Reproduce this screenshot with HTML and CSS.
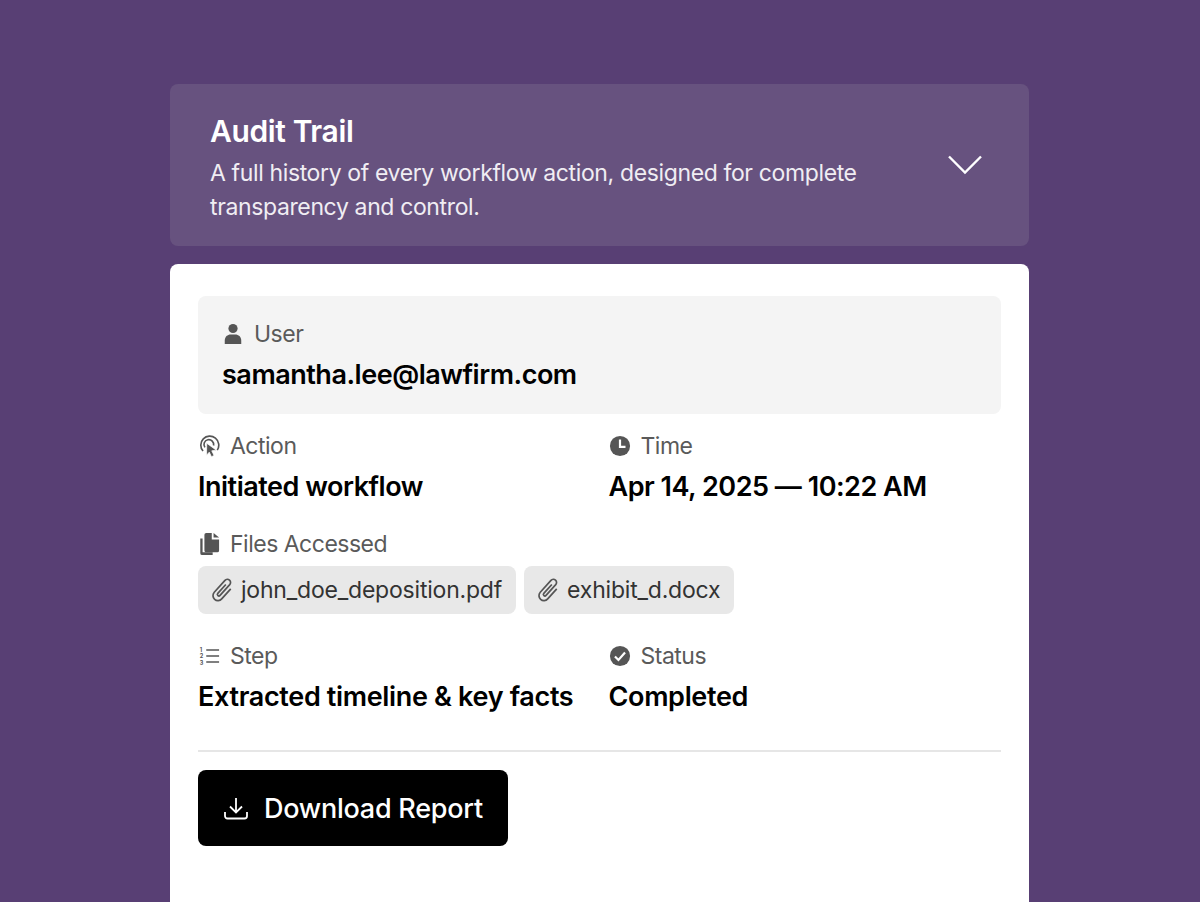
FILE: index.html
```html
<!DOCTYPE html>
<html lang="en">
<head>
    <meta charset="UTF-8">
    <title>Audit Trail</title>
    <link rel="stylesheet" href="styles.css">
</head>
<body>
    <main class="panel">
        <header class="panel-head">
            <div class="panel-head-text">
                <h1>Audit Trail</h1>
                <p>A full history of every workflow action, designed for complete transparency and control.</p>
            </div>
            <svg class="chevron" viewBox="0 0 34 20" width="34" height="20" fill="none" stroke="#fff" stroke-width="2.4"><path d="M1 1.5 17 17.5 33 1.5"/></svg>
        </header>

        <section class="card">
            <div class="user-box">
                <div class="label">
                    <svg class="icon" viewBox="0 0 24 24" fill="#555"><circle cx="12" cy="6" r="5"/><path d="M3 23v-4c0-4 3-6.500 6.500-6.500h5c3.500 0 6.500 2.500 6.500 6.500v4z"/></svg>
                    User
                </div>
                <div class="value">samantha.lee@lawfirm.com</div>
            </div>

            <div class="row">
                <div class="field">
                    <div class="label">
                        <svg class="icon" viewBox="0 0 24 24" fill="none" stroke="#555" stroke-width="1.800"><path d="M5.500 17.500a9.800 9.800 0 1 1 15.500-1"/><path d="M7.500 13.500a5.300 5.300 0 1 1 9.500-2"/><path d="M9.500 9 20 16.500l-5 .8 2.500 5-2.800 1.400-2.400-5-3 3.300z" fill="#555" stroke="#fff" stroke-width=".8"/></svg>
                        Action
                    </div>
                    <div class="value">Initiated workflow</div>
                </div>
                <div class="field">
                    <div class="label">
                        <svg class="icon" viewBox="0 0 24 24"><circle cx="12" cy="12" r="11" fill="#555"/><path d="M12 5v8h6" fill="none" stroke="#fff" stroke-width="2.400"/></svg>
                        Time
                    </div>
                    <div class="value">Apr 14, 2025 — 10:22 AM</div>
                </div>
            </div>

            <div class="files">
                <div class="label">
                    <svg class="icon" viewBox="0 0 24 24" fill="#555"><path d="M2.500 6h2.500v15h11v3H4.500a2 2 0 0 1-2-2z"/><path d="M7 2a2 2 0 0 1 2-2h6v7h8v12a2 2 0 0 1-2 2H9a2 2 0 0 1-2-2z"/><path d="M17 0l6 5h-6z"/></svg>
                    Files Accessed
                </div>
                <div class="chips">
                    <span class="chip">
                        <svg class="clip" viewBox="0 0 24 24" fill="none" stroke="#555" stroke-width="1.700"><path transform="rotate(42 12 12)" d="M17 6v13.500a5 5 0 0 1-10 0V3.500a3.200 3.200 0 0 1 6.400 0v14.500a1.500 1.500 0 0 1-3 0V6"/></svg>
                        john_doe_deposition.pdf
                    </span>
                    <span class="chip">
                        <svg class="clip" viewBox="0 0 24 24" fill="none" stroke="#555" stroke-width="1.700"><path transform="rotate(42 12 12)" d="M17 6v13.500a5 5 0 0 1-10 0V3.500a3.200 3.200 0 0 1 6.400 0v14.500a1.500 1.500 0 0 1-3 0V6"/></svg>
                        exhibit_d.docx
                    </span>
                </div>
            </div>

            <div class="row">
                <div class="field">
                    <div class="label">
                        <svg class="icon" viewBox="0 0 24 24" fill="none" stroke="#555"><path d="M9 5.500h14M9 12h14M9 18.500h14" stroke-width="1.800"/><text class="step-nums" x="2" y="7.500">1</text><text class="step-nums" x="2" y="14.500">2</text><text class="step-nums" x="2" y="21.500">3</text></svg>
                        Step
                    </div>
                    <div class="value value-loose">Extracted timeline &amp; key facts</div>
                </div>
                <div class="field">
                    <div class="label">
                        <svg class="icon" viewBox="0 0 24 24"><circle cx="12" cy="12" r="11" fill="#555"/><path d="M6.500 12.500l3.800 3.800 7.200-8" fill="none" stroke="#fff" stroke-width="2.400"/></svg>
                        Status
                    </div>
                    <div class="value value-loose">Completed</div>
                </div>
            </div>

            <hr class="divider">

            <button class="download" type="button">
                <svg class="download-icon" viewBox="0 0 24 24" fill="none" stroke="#fff" stroke-width="1.800"><path d="M12 2v14M6 10.500l6 6 6-6"/><path d="M1 16v4a2.500 2.500 0 0 0 2.500 2.500h17A2.500 2.500 0 0 0 23 20v-4"/></svg>
                Download Report
            </button>
        </section>
    </main>
</body>
</html>
```

FILE: styles.css
```css
html, body {
    height: 100%;
    overflow: hidden;
}
body {
    margin: 0;
    background-color: #583f74;
    font-family: Inter, "Liberation Sans", sans-serif;
    color: #000;
}
.panel {
    width: 859px;
    margin-left: 170px;
    padding-top: 84px;
}
.panel-head {
    display: flex;
    align-items: center;
    justify-content: space-between;
    height: 162px;
    box-sizing: border-box;
    padding: 6px 47px 0 40px;
    margin-bottom: 18px;
    background-color: #67527f;
    border-radius: 8px;
    color: #fff;
}
.panel-head-text {
    width: 680px;
}
.panel-head h1 {
    margin: 0 0 6px;
    font-size: 30px;
    line-height: 38px;
    font-weight: 600;
    letter-spacing: -0.38px;
}
.panel-head p {
    margin: 0;
    font-size: 23px;
    line-height: 34px;
    letter-spacing: -0.37px;
    color: #f0edf3;
}
.chevron {
    flex: none;
    margin-top: -6px;
}
.card {
    background-color: #fff;
    border-radius: 8px;
    padding: 32px 28px;
    height: 700px;
}
.user-box {
    background-color: #f4f4f4;
    border-radius: 8px;
    padding: 22px 24px;
    height: 118px;
    box-sizing: border-box;
    margin-bottom: 16px;
}
.label {
    display: flex;
    align-items: center;
    gap: 10px;
    font-size: 23px;
    line-height: 32px;
    color: #5a5a5a;
    letter-spacing: -0.5px;
}
.icon {
    width: 22px;
    height: 22px;
    flex: none;
}
.step-nums {
    font-size: 6px;
    font-weight: 700;
    fill: #555;
    stroke: none;
}
.value {
    margin-top: 8px;
    font-size: 27px;
    line-height: 34px;
    font-weight: 600;
    letter-spacing: -0.48px;
}
.value-loose {
    letter-spacing: -0.34px;
}
.row {
    display: grid;
    grid-template-columns: 392px 392px;
    gap: 18.5px;
}
.files {
    margin: 24px 0 26px;
}
.chips {
    display: flex;
    gap: 8px;
    margin-top: 6px;
}
.chip {
    display: flex;
    align-items: center;
    gap: 6px;
    height: 48px;
    padding: 0 14px 0 13px;
    box-sizing: border-box;
    background-color: #e8e8e8;
    border-radius: 8px;
    font-size: 23px;
    letter-spacing: -0.2px;
    color: #333;
}
.clip {
    width: 24px;
    height: 24px;
}
.divider {
    margin: 36px 0 18px;
    border: 0;
    border-top: 2px solid #e6e6e6;
}
.download {
    display: flex;
    align-items: center;
    gap: 16px;
    height: 76px;
    padding: 0 25px 0 26px;
    background-color: #000;
    color: #fff;
    border: 0;
    border-radius: 8px;
    font-family: inherit;
    font-size: 27px;
    font-weight: 500;
    letter-spacing: -0.25px;
}
.download-icon {
    width: 24px;
    height: 24px;
}
```
